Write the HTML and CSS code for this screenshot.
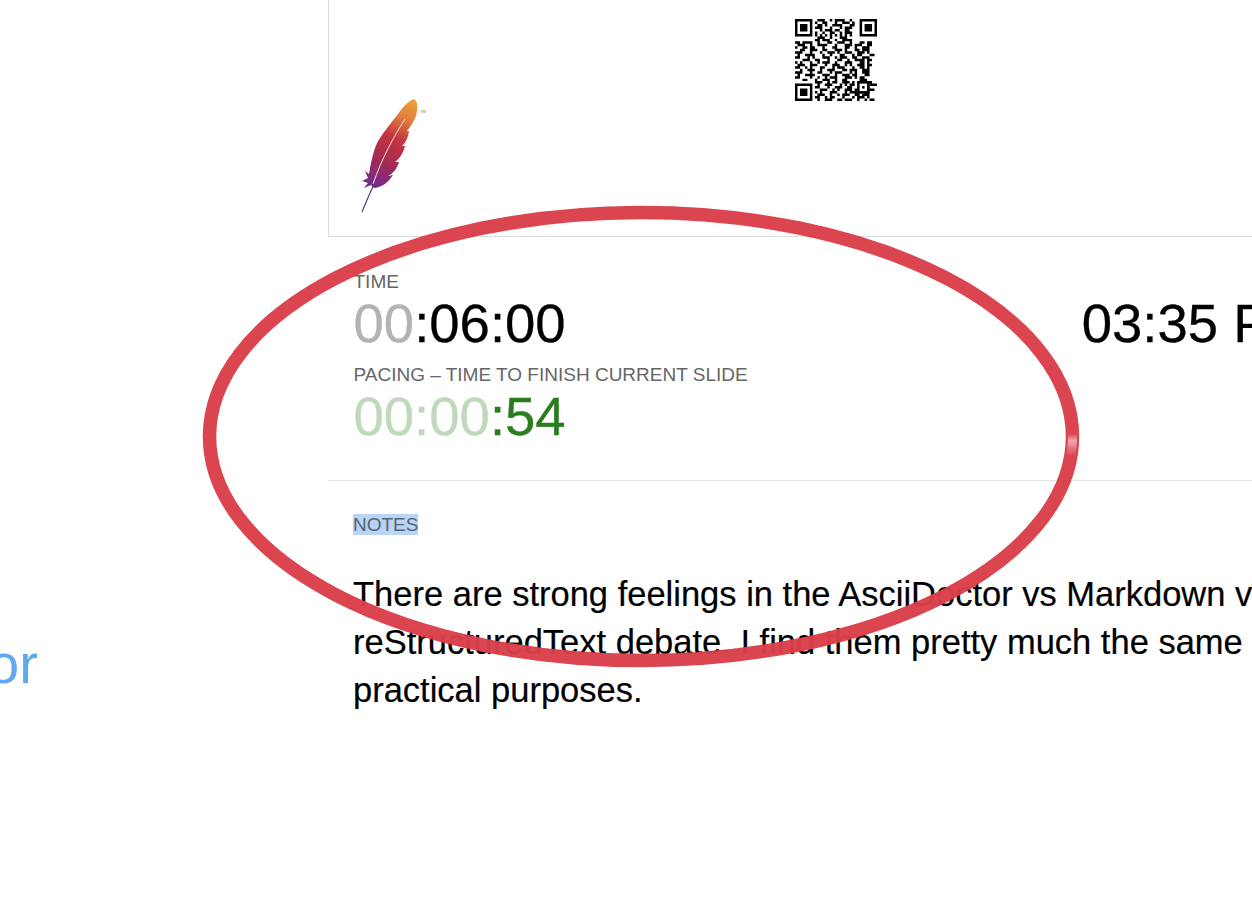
FILE: index.html
```html
<!DOCTYPE html>
<html lang="en">
<head>
  <meta charset="UTF-8" />
  <meta name="viewport" content="width=device-width, initial-scale=1.0" />
  <title>Speaker View</title>
  <link rel="stylesheet" href="styles.css">
</head>
<body>
  <div class="current-slide">
    <div class="slide-word">or</div>
  </div>

  <div class="speaker">
    <div class="upcoming">
      <svg class="feather" viewBox="0 0 70 120" width="70" height="120" aria-hidden="true">
        <defs>
          <linearGradient id="featherFill" x1="56" y1="3" x2="10" y2="95" gradientUnits="userSpaceOnUse">
            <stop offset="0" stop-color="#eda33c"/>
            <stop offset="0.2" stop-color="#e0803a"/>
            <stop offset="0.42" stop-color="#c4343f"/>
            <stop offset="0.68" stop-color="#a32a52"/>
            <stop offset="0.88" stop-color="#7d2a85"/>
            <stop offset="1" stop-color="#5f2f8c"/>
          </linearGradient>
          <linearGradient id="notch" x1="0" y1="434" x2="0" y2="456" gradientUnits="userSpaceOnUse">
            <stop offset="0" stop-color="#f0b4b8" stop-opacity="0"/>
            <stop offset="0.3" stop-color="#f0b4b8" stop-opacity="0.9"/>
            <stop offset="1" stop-color="#f0b4b8" stop-opacity="0"/>
          </linearGradient>
        </defs>
        <path fill="url(#featherFill)" d="M56 3C50 5 45 11 40 18C33 27 24 38 19 47C15 56 13 66 11 78L7 75L10 82L4 85L10 87L6 92L13 89L16 92C24 91 30 87 35 79L30 80C36 77 39 72 41 66L37 66C42 62 45 58 47 50L44 50C48 46 50 42 51 35L49 35C53 30 56 25 58 20C60 12 60 5 56 3Z"/>
        <path fill="none" stroke="#f7e3d8" stroke-width="1" d="M47 23C36 40 24 62 15 88"/>
        <path fill="none" stroke="#5b3a78" stroke-width="1.2" d="M16 88C12 97 7 108 4 116"/>
        <text class="tm" x="62" y="17">TM</text>
      </svg>
      <svg class="qr" viewBox="0 0 33 33" width="82" height="82" aria-hidden="true">
        <path fill="none" stroke="#000" d="M.5 .5h6v6h-6zM26.500 .5h6v6h-6zM.5 26.500h6v6h-6z"/>
        <path d="M2 2h3v3h-3zM28 2h3v3h-3zM2 28h3v3h-3zM25 25h5v5h-5z"/>
        <path fill="#fff" d="M26 26h3v3h-3z"/>
        <path d="M27 27h1v1h-1z"/>
        <path fill="none" stroke="#000" d="M9 .5h3m2 0h1m1 0h4m2 0h1M8 1.500h1m2 0h2m3 0h1m2 0h3m1 0h1M9 2.500h2m1 0h1m2 0h4m3 0h2M8 3.500h3m3 0h1m3 0h1m1 0h3M10 4.500h1m1 0h3m1 0h2m2 0h2M8 5.500h1m2 0h1m2 0h2m2 0h1m1 0h3M8 6.500h1m1 0h1m1 0h1m1 0h1m1 0h1m1 0h1m1 0h1m1 0h1M9 7.500h3m2 0h1m3 0h3M8 8.500h2m1 0h3m2 0h1m2 0h4M0 9.500h2m1 0h4m2 0h1m3 0h2m2 0h3m2 0h1m3 0h2m1 0h2M1 10.500h3m2 0h1m2 0h4m3 0h1m3 0h3m1 0h3m2 0h2M0 11.500h1m2 0h2m1 0h2m3 0h1m3 0h2m3 0h2m2 0h1m2 0h3M2 12.500h2m2 0h3m2 0h2m3 0h3m1 0h1m3 0h2m1 0h3M0 13.500h3m3 0h1m3 0h1m2 0h3m1 0h1m2 0h3m2 0h3m1 0h1M1 14.500h1m2 0h4m3 0h1m2 0h1m3 0h2m3 0h1m1 0h2m3 0h2M0 15.500h2m3 0h1m1 0h1m3 0h3m2 0h1m1 0h3m2 0h2m2 0h3M3 16.500h3m2 0h2m3 0h1m3 0h2m2 0h1m2 0h4m1 0h2M0 17.500h1m1 0h1m3 0h1m2 0h1m1 0h3m2 0h1m3 0h3m3 0h2m1 0h1M1 18.500h3m2 0h3m3 0h1m2 0h3m2 0h1m1 0h1m2 0h3m1 0h2M0 19.500h2m2 0h1m1 0h1m3 0h2m3 0h1m1 0h3m3 0h1m2 0h2m1 0h1M2 20.500h1m2 0h3m2 0h1m2 0h3m3 0h2m1 0h3m2 0h3M0 21.500h3m3 0h1m2 0h2m3 0h1m1 0h3m3 0h1m1 0h1m2 0h3M1 22.500h1m2 0h4m3 0h3m2 0h1m2 0h3m1 0h2m3 0h2M0 23.500h2m4 0h1m2 0h1m2 0h1m1 0h3m3 0h3m1 0h1m1 0h2M3 24.500h2m3 0h1m2 0h3m2 0h1m2 0h2m5 0h3M8 25.500h3m2 0h1m1 0h2m2 0h3m1 0h1m5 0h2M9 26.500h1m2 0h3m3 0h1m1 0h1m1 0h2m6 0h3M8 27.500h2m3 0h1m2 0h3m2 0h2m6 0h1M10 28.500h3m2 0h1m1 0h1m2 0h3m1 0h1m4 0h3M8 29.500h1m1 0h1m3 0h3m3 0h1m1 0h5m1 0h2M9 30.500h3m2 0h1m2 0h1m1 0h3m2 0h2m1 0h3M8 31.500h2m2 0h1m1 0h2m3 0h1m3 0h1m1 0h3m1 0h1M9 32.500h1m2 0h3m2 0h2m1 0h3m2 0h1m2 0h1m1 0h2"/>
      </svg>
    </div>

    <div class="timers">
      <div class="timer-stack">
        <div class="label">TIME</div>
        <div class="clock"><span class="dim-gray">00</span>:06:00</div>
        <div class="label">PACING – TIME TO FINISH CURRENT SLIDE</div>
        <div class="clock pacing"><span class="dim-green">00:00</span>:54</div>
      </div>
      <div class="clock wall">03:35 PM</div>
    </div>

    <div class="notes">
      <div class="label"><span class="selected">NOTES</span></div>
      <p>There are strong feelings in the AsciiDoctor vs Markdown vs reStructuredText debate. I find them pretty much the same for all practical purposes.</p>
    </div>
  </div>

  <svg class="annotation" viewBox="0 0 1252 903" width="1252" height="903" aria-hidden="true">
    <ellipse cx="641" cy="436.500" rx="431.500" ry="224" fill="none" stroke="#da3f4a" stroke-width="13.500"/>
    <path fill="none" stroke="url(#notch)" stroke-width="9" d="M1072.500 434C1072.500 442 1072 450 1071 456"/>
  </svg>
</body>
</html>
```

FILE: styles.css
```css
html, body {
  height: 100%;
}
body {
  margin: 0;
  display: flex;
  overflow: hidden;
  background: white;
  color: black;
  font-family: "Liberation Sans", Arial, sans-serif;
}
.current-slide {
  flex: none;
  width: 328px;
  padding-top: 632px;
  box-sizing: border-box;
}
.slide-word {
  margin-left: -12px;
  font-size: 56px;
  line-height: 64px;
  color: #5fa9f1;
}
.speaker {
  flex: none;
  width: 1012px;
}
.upcoming {
  display: flex;
  justify-content: space-between;
  box-sizing: border-box;
  border-left: 1px solid #dcdcdc;
  border-bottom: 1px solid #dcdcdc;
  padding: 0 463px 0 29px;
  height: 237px;
}
.feather {
  align-self: flex-end;
  margin-bottom: 20px;
}
.feather .tm {
  font-size: 4px;
  fill: #777;
}
.qr {
  margin-top: 19px;
}
.timers {
  display: flex;
  justify-content: space-between;
  height: 244px;
  box-sizing: border-box;
  padding: 34px 25px 0 25.500px;
  border-bottom: 1px solid #e4e4e4;
}
.label {
  font-size: 19px;
  line-height: 21px;
  color: #666;
  margin-bottom: 1px;
}
.clock {
  font-size: 54.500px;
  line-height: 62px;
  margin-bottom: 9px;
  white-space: nowrap;
  -webkit-text-stroke: 0.3px;
}
.wall {
  margin-top: 22px;
}
.dim-gray {
  color: #b3b3b3;
}
.pacing {
  color: #2a7d1e;
}
.dim-green {
  color: #c0d8bb;
}
.notes {
  padding: 33px 0 0 25px;
}
.selected {
  background: #b9d4f5;
  color: #566478;
}
.notes p {
  margin: 35px 0 0;
  font-size: 34.500px;
  line-height: 48px;
  -webkit-text-stroke: 0.2px;
}
.annotation {
  position: absolute;
  top: 0;
  left: 0;
  opacity: 0.97;
  pointer-events: none;
}
```
